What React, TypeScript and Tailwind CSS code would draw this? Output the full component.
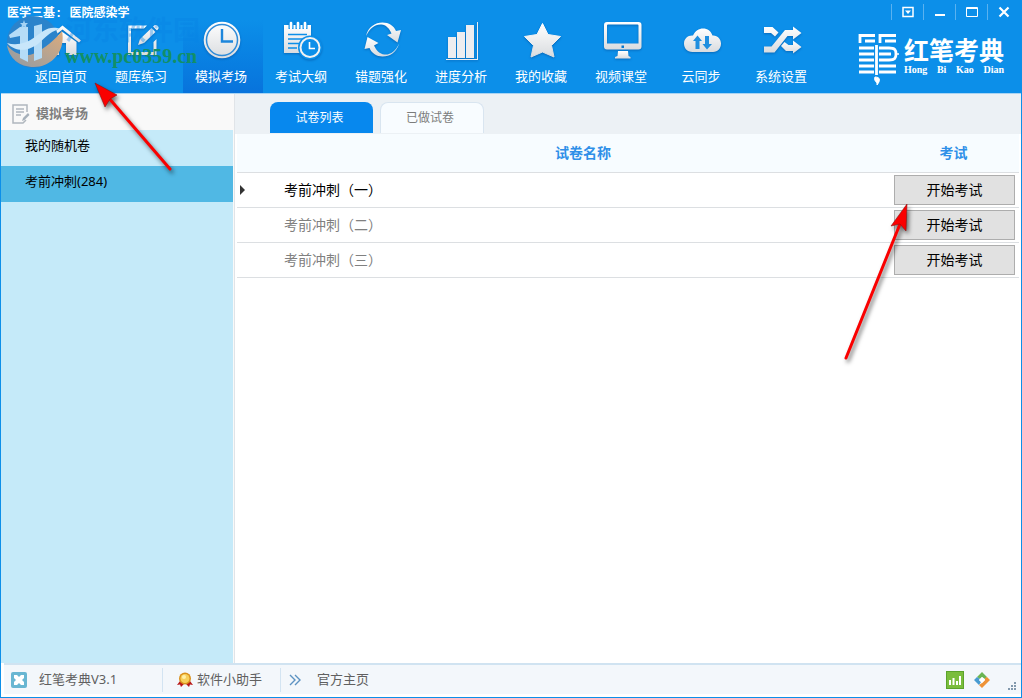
import React, {useState} from "react";

const navItems = [
  {label: "返回首页", icon: <HomeIcon />},
  {label: "题库练习", icon: <EditIcon />},
  {label: "模拟考场", icon: <ClockIcon />},
  {label: "考试大纲", icon: <OutlineIcon />},
  {label: "错题强化", icon: <RefreshIcon />},
  {label: "进度分析", icon: <BarsIcon />},
  {label: "我的收藏", icon: <StarIcon />},
  {label: "视频课堂", icon: <MonitorIcon />},
  {label: "云同步", icon: <CloudIcon />},
  {label: "系统设置", icon: <ShuffleIcon />},
];

const papers = ["考前冲刺（一）", "考前冲刺（二）", "考前冲刺（三）"];

function Icon({children}: {children: React.ReactNode}) {
  return (
    <svg viewBox="0 0 40 40" className="h-10 w-10 drop-shadow-[0_1px_1px_rgba(0,50,120,0.4)]" fill="url(#silver)" aria-hidden="true">
      {children}
    </svg>
  );
}

function HomeIcon() {
  return (
    <Icon>
      <path d="M19.5 5.5 1 20.5 3 22.5 19.5 9.5 36 22.5 38 20.5Z" />
      <path d="M19.5 12 6.5 22V35H16V23h7v12h10.5V22Z" />
    </Icon>
  );
}

function EditIcon() {
  return (
    <Icon>
      <path d="M24 5.5H5V35H33.5V19L30.5 22V32H8V8.5H21Z" />
      <path d="m15 25 2-6L28.500 8l4 4L21 23ZM30 6.500l2-1.500c2-.5 4 1.500 3.500 3.500L34 10.500Z" />
    </Icon>
  );
}

function ClockIcon() {
  return (
    <Icon>
      <circle cx="19" cy="20" r="18.3" />
      <circle cx="19" cy="20" r="15.5" fill="none" stroke="#2f8bd8" strokeWidth="1.5" />
      <path d="M19 9v12.500h11" fill="none" stroke="#1d86dc" strokeWidth="2.400" />
    </Icon>
  );
}

function OutlineIcon() {
  return (
    <Icon>
      <path d="M1 5H28V33H1Z" />
      <path d="M8 1V9M15 1V9M22 1V9" stroke="#0c8fe9" strokeWidth="5" />
      <path d="M5 14.500H24M5 19H20M5 23.500H16M5 28H14" stroke="#0c8fe9" strokeWidth="1.600" />
      <path d="M8 3V8M15 3V8M22 3V8" stroke="#fff" strokeWidth="2.600" strokeLinecap="round" />
      <circle cx="27" cy="27.500" r="12" fill="#0c8fe9" />
      <circle cx="27" cy="27.500" r="9.500" fill="none" stroke="#f2f2f2" strokeWidth="2" />
      <path d="M26.500 22v6.500H32" fill="none" stroke="#fff" strokeWidth="1.600" />
    </Icon>
  );
}

function RefreshIcon() {
  return (
    <Icon>
      <path d="M3 16C5 7 12 2.500 19.500 2.500c6.500 0 11 3 13.500 8.500l5-1L34.500 22.500 24 15l4.500-1.500C26 8 23 5 18.500 4.500 12 4 7 8 3 16Z" />
      <path d="M36 23.500c-2 8.500-9 13-16.500 13-6 0-10.500-3-13-8.500L1.500 29 4.500 17 15.500 23 11 25.500c2.500 5 5.500 8.500 10.500 9 6 .5 11-3 14.500-11Z" />
    </Icon>
  );
}

function BarsIcon() {
  return (
    <Icon>
      <path d="M5 17h8v21H5ZM14 12h8v26h-8ZM23 5h8v33h-8ZM34 2h1v38H3v-1H34Z" fill="#ededf0" />
    </Icon>
  );
}

function StarIcon() {
  return (
    <Icon>
      <path
        d="m19.500 3.500 5.500 11 12.500 2-9 9L31 37l-11.500-5L8 37l2.500-11.500-9-9 12.500-2Z"
        stroke="url(#silver)"
        strokeLinejoin="round"
      />
    </Icon>
  );
}

function MonitorIcon() {
  return (
    <Icon>
      <path
        fillRule="evenodd"
        d="M4 2H35.500a3 3 0 0 1 3 3V26.500a3 3 0 0 1-3 3H4a3 3 0 0 1-3-3V5a3 3 0 0 1 3-3ZM5 4.500a1 1 0 0 0-1 1V23.500H35.500V5.500a1 1 0 0 0-1-1ZM18.500 25.500v2.500H21V25.500Z"
      />
      <path d="M15 31h10l.5 5 2 1v1.500H12V37l2.500-1Z" />
    </Icon>
  );
}

function CloudIcon() {
  return (
    <Icon>
      <path d="M9.500 32C4 32 1 28 1 23.500c0-5 4-8.500 9-8C12 11 16 8.500 20 8.500c4.500 0 8 2.500 9.500 7 5-.5 8.500 3.500 8.500 8S35 32 30 32Z" />
      <path d="M14.500 15.500 19 21h-2.500v8h-4v-8H10ZM22 16h4v8h3L24 29.500 19.500 24H22Z" fill="#208fdf" />
    </Icon>
  );
}

function ShuffleIcon() {
  return (
    <Icon>
      <path d="M1 7H9.500L15.500 12.500 12 16.500 8 13H1ZM1 26.500H8.500L22 10H30V6.500L38.500 13 30 19.500V16H24.500L11.500 32.500H1Z" />
      <path d="m18 26 3.500-4 4 3H30V20.500L38.500 27 30 33.500V31H23Z" />
    </Icon>
  );
}

function BrandMark() {
  return (
    <svg viewBox="0 0 42 54" className="h-[54px] w-[42px]" fill="none" stroke="#fff" strokeWidth="2.800" aria-hidden="true">
      <path d="M2 11V3.500H17M22 11V3.500H38M7 9H17M27 9H38" />
      <path d="M1 16H31C37 16 38 18 38 22S37 28 31 28H1M1 22H33M1 34H38M1 40H38" />
      <path d="M38 22H41" strokeWidth="1.500" />
      <path d="M18.500 12V44" stroke="#0c8fe9" strokeWidth="5" />
      <path d="M18.500 13V43" />
      <path d="M17 45c5 0 6 3 2 8 1-3-4-4-2-8Z" fill="#fff" strokeWidth="1" />
    </svg>
  );
}

function Watermark() {
  return (
    <div className="pointer-events-none absolute top-3 left-1 flex" aria-hidden="true">
      <svg viewBox="0 0 60 56" className="h-14 w-15 shrink-0">
        <circle cx="28" cy="30" r="26" fill="#2b83cb" />
        <path d="M2 33C9 42 20 46 30 41S50 28 57 19C61 39 47 55 29 55 14 55 4 46 2 33Z" fill="url(#copper)" />
        <path d="M4 23 15 15H23V50L15 46V24L5 26ZM29 14 37 12V46L29 49Z" fill="#b5dcf7" />
        <path d="M2 31C12 34 22 31 30 25S44 13 56 17C47 18 42 24 34 31S12 42 2 31Z" fill="#c8e6fa" />
        <path d="m19 8 1 3h3l-2 2 .5 3-2.500-1.500L16 16l1-3-2-2h3Z" fill="#a5d3f5" />
      </svg>
      <div className="flex flex-col pt-1">
        <span className="h-8 text-[27px] leading-7 font-bold text-[#0783e5]/40">河东软件园</span>
        <span className="font-['Liberation_Serif',serif] text-xl leading-4 font-bold text-[#128f67]">www.pc0359.cn</span>
      </div>
    </div>
  );
}

function WindowControls() {
  const button = "flex h-4 w-8 items-center justify-center border-l border-[#5ab2f0]";
  return (
    <div className="flex pt-1 pr-0.5">
      <button className={button} aria-label="菜单">
        <svg viewBox="0 0 12 12" className="h-3 w-3" fill="none" stroke="#fff" strokeWidth="1.500">
          <path d="M1 1.500H11V10.500H1Z" />
          <path d="M3 4.500h6L6 8Z" fill="#fff" stroke="none" />
        </svg>
      </button>
      <button className={button} aria-label="最小化">
        <svg viewBox="0 0 12 12" className="h-3 w-3">
          <path d="M1 8h10v2H1Z" fill="#fff" />
        </svg>
      </button>
      <button className={button} aria-label="最大化">
        <svg viewBox="0 0 12 12" className="h-3 w-3" fill="none" stroke="#fff">
          <path d="M.5 1.500H11.500V10.500H.5ZM.5 2.500H11.500" />
        </svg>
      </button>
      <button className={button} aria-label="关闭">
        <svg viewBox="0 0 12 12" className="h-3 w-3" stroke="#fff" strokeWidth="2.200">
          <path d="M1.500 1.500 10.500 10.500M10.500 1.500 1.500 10.500" />
        </svg>
      </button>
    </div>
  );
}

function Header({active, onSelect}: {active: string; onSelect: (label: string) => void}) {
  return (
    <header className="relative flex justify-between border-b border-[#a9d4f3] bg-[#0c8fe9] text-white">
      <div>
        <h1 className="h-5 pt-1.5 pl-1.5 font-['Liberation_Mono','Noto_Sans_CJK_SC',monospace] text-xs leading-4 font-bold">医学三基: 医院感染学</h1>
        <nav className="flex pl-[22px]">
          {navItems.map((item) => (
            <button
              key={item.label}
              onClick={() => onSelect(item.label)}
              className={
                item.label === active
                  ? "flex h-[73px] w-20 flex-col items-center bg-linear-to-b from-[#0c8fe9] to-[#0873dc]"
                  : "flex h-[73px] w-20 flex-col items-center"
              }
            >
              {item.icon}
              <span className="pt-1.5 pr-1 text-[13px] leading-5">{item.label}</span>
            </button>
          ))}
        </nav>
      </div>
      <Watermark />
      <div className="flex flex-col items-end">
        <WindowControls />
        <div className="flex gap-1 pt-3 pr-[17px]">
          <BrandMark />
          <div className="flex flex-col pt-1.5">
            <span className="font-['Liberation_Serif','Noto_Sans_CJK_SC',serif] text-[25px] leading-7 font-bold">红笔考典</span>
            <span className="flex justify-between font-['Liberation_Serif',serif] text-[10px] leading-2 font-bold">
              <span>Hong</span>
              <span>Bi</span>
              <span>Kao</span>
              <span>Dian</span>
            </span>
          </div>
        </div>
      </div>
    </header>
  );
}

function Sidebar() {
  return (
    <aside className="flex w-[234px] shrink-0 flex-col border-r border-[#e0e4e8] bg-[#f9f9f9]">
      <h2 className="flex h-9 items-center gap-1.5 pt-1 pl-[11px] text-[13px] font-bold text-[#7f7f7f]">
        <svg viewBox="0 0 18 20" className="h-5 w-[18px]" fill="none" stroke="#b0b7be" strokeWidth="1.500" aria-hidden="true">
          <path d="M15 8V1H1V19H11L14 16M4 5H12M4 8H12M4 11H9" />
          <path d="m10 17 1-3 5-5 1.500 2-5 5Z" fill="#a6b0ba" stroke="none" />
        </svg>
        模拟考场
      </h2>
      <div className="mr-px flex flex-1 flex-col bg-[#c5eaf9] text-[13px] text-black">
        <button className="h-9 pb-1 pl-6 text-left">我的随机卷</button>
        <button className="h-9 bg-[#50b8e4] pb-1 pl-6 text-left">考前冲刺(284)</button>
      </div>
    </aside>
  );
}

function PaperTable() {
  return (
    <table className="w-full table-fixed border-collapse text-sm">
      <colgroup>
        <col className="w-[37px]" />
        <col />
        <col className="w-[127px]" />
      </colgroup>
      <thead>
        <tr className="h-[38px] border-b border-[#dcdfe2] bg-[#f7fcff] text-[#2e8fe8]">
          <th aria-label="当前行" />
          <th>试卷名称</th>
          <th className="pr-1">考试</th>
        </tr>
      </thead>
      <tbody>
        {papers.map((paper, i) => (
          <tr key={paper} className="h-[35px] border-b border-[#dcdfe2]">
            <td>
              {i === 0 && (
                <svg viewBox="0 0 5 10" className="ml-[3px] h-2.5 w-[5px]" aria-hidden="true">
                  <path d="M0 0 5 5 0 10Z" fill="#333" />
                </svg>
              )}
            </td>
            <td className={i === 0 ? "pl-2.5 text-black" : "pl-2.5 text-[#808080]"}>{paper}</td>
            <td className="pr-1 pl-0.5">
              <button className="block h-[30px] w-full border border-[#adadad] bg-[#e1e1e1] text-black">开始考试</button>
            </td>
          </tr>
        ))}
      </tbody>
    </table>
  );
}

function Footer() {
  return (
    <footer className="bg-white pb-[3px] text-[13px] text-[#606060]">
      <div className="ml-[3px] flex h-[31px] items-center border-t-2 border-[#d0e3f1] bg-[#f3f7fb] pt-px">
        <div className="flex w-[158px] items-center gap-3 pl-[7px]">
          <svg viewBox="0 0 16 16" className="h-4 w-4" aria-hidden="true">
            <rect width="16" height="16" rx="2" fill="#68b6d2" />
            <path d="M3 3h3l2 2 2-2h3v3l-2 2 2 2v3h-3l-2-2-2 2H3v-3l2-2-2-2Z" fill="#fff" />
          </svg>
          红笔考典V3.1
        </div>
        <button className="flex h-6 w-[118px] items-center gap-1 border-l border-[#d3e4f2] pl-3.5">
          <svg viewBox="0 0 16 16" className="h-4 w-4" aria-hidden="true">
            <path d="m3 9-3 4 3-.5L4 15l4-4 4 4 1-2.500 3 .5-3-4Z" fill="#b91818" />
            <circle cx="8" cy="6.500" r="6" fill="#d9901c" />
            <circle cx="8" cy="6.500" r="4.500" fill="#f7d05c" />
            <circle cx="7" cy="5" r="2" fill="#fff0a8" />
          </svg>
          软件小助手
        </button>
        <a href="#home" className="flex h-6 items-center gap-4 border-l border-[#d3e4f2] pl-2">
          <svg viewBox="0 0 12 12" className="h-3 w-3" fill="none" stroke="#5c92c2" strokeWidth="1.400" aria-hidden="true">
            <path d="m1 1 5 5-5 5M6 1l5 5-5 5" />
          </svg>
          官方主页
        </a>
        <div className="ml-auto flex items-center gap-2.5 pr-1">
          <svg viewBox="0 0 18 18" className="h-[18px] w-[18px]" aria-hidden="true">
            <rect x=".5" y=".5" width="17" height="17" fill="#7abd3c" stroke="#5ba32b" />
            <path d="M4 9v5M7.500 7v7M11 10v4M14 5v9" stroke="#fff" strokeWidth="2" />
          </svg>
          <svg viewBox="0 0 16 16" className="h-4 w-4" aria-hidden="true">
            <path d="M8 0 3 5l3 2 2-2 3 2 2-2Z" fill="#6bb554" />
            <path d="M3 5 0 8l5 5 2-3-2-2 1-1Z" fill="#489bd1" />
            <path d="m13 5 3 3-8 8-3-3 3-2 3-3V6Z" fill="#ee9338" />
            <path d="M8 5 5 8l3 3 3-3Z" fill="#fff" />
          </svg>
          <svg viewBox="0 0 9 9" className="mt-3 ml-2 h-[9px] w-[9px]" fill="#8299ad" aria-hidden="true">
            <path d="M6 0h2v2H6ZM3 3h2v2H3ZM6 3h2v2H6ZM0 6h2v2H0ZM3 6h2v2H3ZM6 6h2v2H6Z" />
          </svg>
        </div>
      </div>
    </footer>
  );
}

// Red pointers laid over the window
function Pointers() {
  return (
    <>
      <svg viewBox="0 0 90 100" className="pointer-events-none absolute top-20 left-[89px] h-[100px] w-[90px] drop-shadow-[2px_3px_2px_rgba(0,0,0,0.55)]" aria-hidden="true">
        <path d="M18 17 80 89" stroke="#fa0000" strokeWidth="3" strokeLinecap="round" />
        <path d="m5 3 22 12-7 4-5 8Z" fill="#fa0000" stroke="#8c1010" strokeWidth=".6" />
      </svg>
      <svg viewBox="0 0 80 170" className="pointer-events-none absolute top-[200px] right-[101px] h-[170px] w-20 drop-shadow-[2px_3px_2px_rgba(0,0,0,0.55)]" aria-hidden="true">
        <path d="M60 24 6 158" stroke="#fa0000" strokeWidth="3" strokeLinecap="round" />
        <path d="M67 4 66 31l-6-7-9 2Z" fill="#fa0000" stroke="#8c1010" strokeWidth=".6" />
      </svg>
    </>
  );
}

export default function App() {
  const [page, setPage] = useState("模拟考场");
  const [tab, setTab] = useState("试卷列表");

  return (
    <div className="relative flex min-h-screen flex-col border-x border-b border-[#0c8fe9] bg-white font-['Noto_Sans','Noto_Sans_CJK_SC',sans-serif]">
      <svg className="absolute h-0 w-0" aria-hidden="true">
        <linearGradient id="silver" x1="0" y1="0" x2="0" y2="1">
          <stop stopColor="#fff" />
          <stop offset="1" stopColor="#d9dcdf" />
        </linearGradient>
        <linearGradient id="copper" x1="0" y1="1" x2="1" y2="0">
          <stop stopColor="#8f9ba6" />
          <stop offset="1" stopColor="#dcab7c" />
        </linearGradient>
      </svg>
      <Header active={page} onSelect={setPage} />
      <div className="flex flex-1">
        <Sidebar />
        <main className="flex-1">
          <div className="flex h-10 items-end gap-[7px] bg-[#ecf1f5] pb-px pl-[35px] text-xs">
            {["试卷列表", "已做试卷"].map((name) => (
              <button
                key={name}
                onClick={() => setTab(name)}
                className={
                  name === tab
                    ? "h-[31px] w-[103px] rounded-t-lg bg-[#0788ee] pr-1 text-white"
                    : "h-[31px] w-[104px] rounded-t-lg border border-b-0 border-[#d9e5f0] bg-[#f8fcff] pr-1 text-[#7c7c7c]"
                }
              >
                {name}
              </button>
            ))}
          </div>
          <div className="px-0.5">
            <PaperTable />
          </div>
        </main>
      </div>
      <Footer />
      <Pointers />
    </div>
  );
}
